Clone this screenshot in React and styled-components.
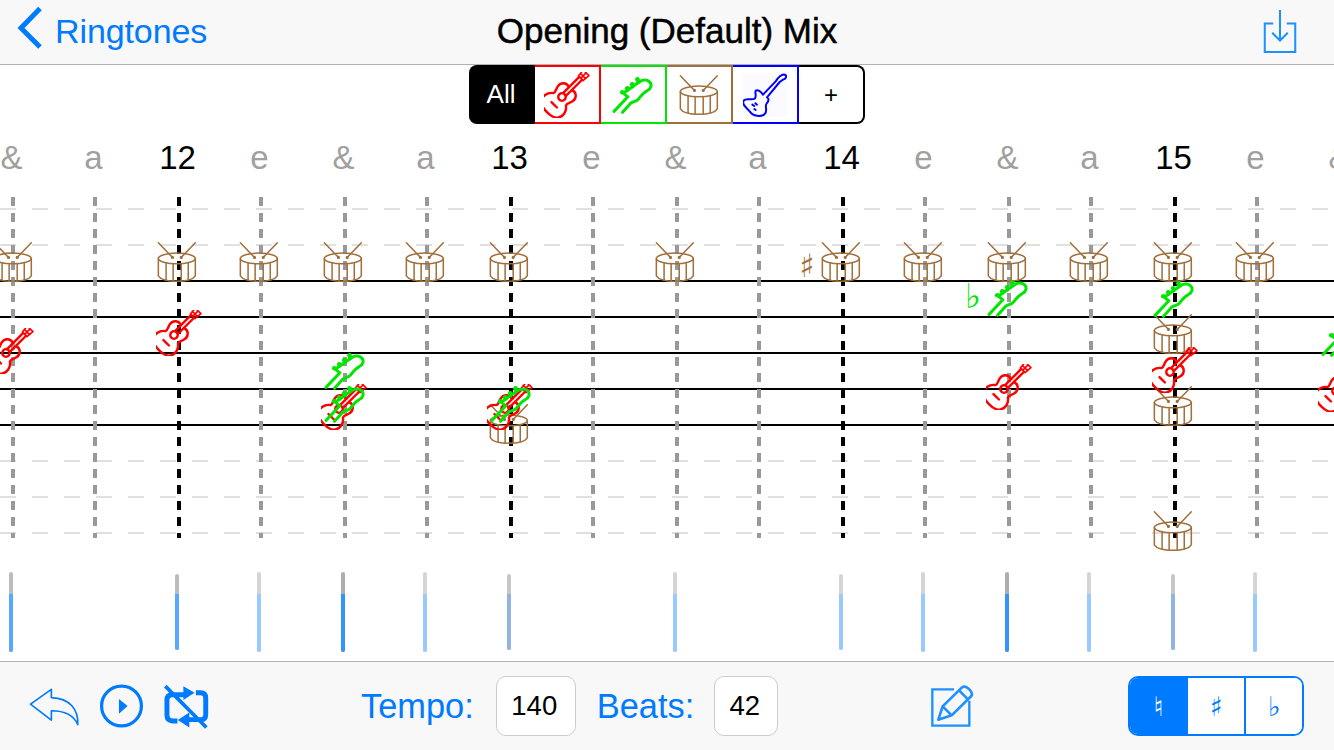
import React from "react";
import styled, { createGlobalStyle } from "styled-components";

const BLUE = "#007aff";
const BROWN = "#a0703c";
const RED = "#ff0000";
const GREEN = "#00e600";

const GlobalStyle = createGlobalStyle`
  html, body { margin: 0; padding: 0; background: #fff; }
  body { font-family: "Liberation Sans", Arial, sans-serif; overflow: hidden; }
`;

// drawings, all in the coordinates they were traced at
function Guitar({ color = RED }) {
  return (
    <svg viewBox="0 0 46 46" width="46" height="46" fill="none" stroke={color} strokeWidth="2.2" strokeLinecap="round" strokeLinejoin="round">
      <g transform="translate(18 25) rotate(45) scale(1.1)">
        <path d="M-2.5 -11C-7 -12.5 -10.5 -8 -9.5 -4C-9 -1 -7 1 -8 3C-12.5 6 -13.5 12 -10.5 16C-7 20.5 7 20.5 10.5 16C13.5 12 12.5 6 8 3C7 1 9 -1 9.5 -4C10.5 -8 7 -12.5 2.5 -11" />
        <circle cx="0" cy="0" r="3.4" />
        <path d="M-1.8 -3.2V-24M1.8 -3.2V-24M-3.5 10H3.5" />
        <path d="M-3 -24L-3.6 -31H3.6L3 -24ZM-3.4 -27H3.4M0 -24V-31" strokeWidth="1.5" />
      </g>
    </svg>
  );
}

function Bass({ color = GREEN }) {
  return (
    <svg viewBox="460 45 125 115" width="42" height="38" fill="none" stroke={color} strokeWidth="9" strokeLinecap="round" strokeLinejoin="round">
      <path d="M465 152L507 108L493 97L540 64C550 56 564 55 572 62C581 70 578 83 566 89C552 95 546 108 538 116C530 124 522 122 516 127L491 155" />
      <path d="M507 88L505 82M522 78L520 70M538 66L535 56" />
      <circle cx="490" cy="94" r="7" fill={color} stroke="none" />
      <circle cx="505" cy="82" r="7" fill={color} stroke="none" />
      <circle cx="520" cy="70" r="7" fill={color} stroke="none" />
      <circle cx="536" cy="55" r="7" fill={color} stroke="none" />
    </svg>
  );
}

function Drum({ color = BROWN }) {
  return (
    <svg viewBox="655 38 125 125" width="42" height="42" fill="none" stroke={color} strokeWidth="4.5" strokeLinecap="round">
      <path d="M662 43L704 87M772 43L730 87" />
      <circle cx="704" cy="87" r="2.5" fill={color} />
      <circle cx="730" cy="87" r="2.5" fill={color} />
      <ellipse cx="717" cy="90" rx="55" ry="16" />
      <path d="M662 90V142C668 152 690 158 717 158C744 158 766 152 772 142V90" />
      <path d="M685 104V153M706 107V158M730 107V158M751 104V153" />
    </svg>
  );
}

function ElectricGuitar({ color = "#0000ff" }) {
  return (
    <svg viewBox="850 35 132 132" width="44" height="44" fill="none" stroke={color} strokeWidth="6" strokeLinecap="round" strokeLinejoin="round">
      <rect x="850" y="35" width="132" height="132" fill="#fafaff" stroke="none" />
      <path d="M888 88C895 84 905 92 910 100L948 60C955 50 965 38 975 40C983 42 980 52 970 55L960 62L922 108C930 112 926 120 920 128C915 135 925 150 915 158C905 168 880 165 870 150C860 138 845 130 852 118C858 108 875 118 885 112C892 106 885 95 888 88Z" />
      <path d="M878 130L884 134M887 126L892 130M884 143L888 146" />
    </svg>
  );
}

const ChevronSvg = styled.svg`
  margin-top: -9px;
`;

const Chevron = () => (
  <ChevronSvg viewBox="0 0 28 44" width="28" height="44" fill="none" stroke={BLUE} strokeWidth="5">
    <path d="M24 3.5L5 23L24 42" />
  </ChevronSvg>
);

const ExportIcon = () => (
  <svg viewBox="70 25 100 130" width="34" height="44" fill="none" stroke="#1e90ff" strokeWidth="6">
    <path d="M100 68H75V152H165V68H140M120 28V115M97 95L120 118L143 95" />
  </svg>
);

const UndoIcon = () => (
  <svg viewBox="88 76 156 118" width="52" height="39" fill="none" stroke={BLUE} strokeWidth="5" strokeLinejoin="round">
    <path d="M95 128L158 83V108C215 110 240 145 238 190C225 160 195 148 158 148V176Z" />
  </svg>
);

const PlayIcon = () => (
  <svg viewBox="296 64 140 140" width="45" height="46" fill="none" stroke={BLUE} strokeWidth="10">
    <circle cx="366" cy="134" r="62" />
    <path d="M358 112L385 134L358 158Z" fill={BLUE} stroke="none" />
  </svg>
);

const RepeatIcon = () => (
  <svg viewBox="488 66 140 136" width="46" height="45" fill="none" stroke={BLUE} strokeWidth="15">
    <path d="M556 98H516Q500 98 500 114V160Q500 178 518 178H532" />
    <path d="M566 174H604Q618 174 618 158V108Q618 92 602 92H588" />
    <path d="M550 72L584 92L550 114Z" fill={BLUE} stroke="none" />
    <path d="M568 152L533 175L568 198Z" fill={BLUE} stroke="none" />
    <path d="M495 72L620 198" strokeWidth="11" />
  </svg>
);

const PencilIcon = () => (
  <svg viewBox="90 68 132 132" width="44" height="44" fill="none" stroke="#1e90ff" strokeWidth="7">
    <path d="M162 84H97V193H208V118" />
    <path d="M115 175L128 135L186 78Q196 72 208 84Q220 96 214 104L155 162ZM128 135L155 162M178 88L204 114" strokeWidth="8" strokeLinejoin="round" />
  </svg>
);

// score data
const beats = [
  { x: 13, label: "&" }, { x: 95, label: "a" }, { x: 179, label: "12", main: true },
  { x: 261, label: "e" }, { x: 345, label: "&" }, { x: 427, label: "a" },
  { x: 511, label: "13", main: true }, { x: 593, label: "e" }, { x: 677, label: "&" },
  { x: 759, label: "a" }, { x: 843, label: "14", main: true }, { x: 925, label: "e" },
  { x: 1009, label: "&" }, { x: 1091, label: "a" }, { x: 1175, label: "15", main: true },
  { x: 1257, label: "e" }, { x: 1341, label: "&" },
];
const solidLines = [83, 119, 155, 191, 227];
const ledgerLines = [11, 47, 263, 299, 335];

// x, y = centre of the note, measured on the staff
const drums = [
  [13, 65], [177, 65], [259, 65], [343, 65], [425, 65], [509, 65], [675, 65],
  [841, 65], [923, 65], [1007, 65], [1089, 65], [1173, 65], [1255, 65],
  [1173, 137], [1173, 209], [509, 227], [1173, 334],
];
const guitars = [
  [11, 154], [179, 136], [344, 210], [510, 210], [1009, 190], [1175, 173], [1341, 192],
];
const basses = [
  [345, 174], [345, 207], [511, 207], [1008, 101], [1174, 102], [1342, 141],
];

const velocities = [
  { x: 11, tone: 0.65 }, { x: 177, tone: 0.65, short: true }, { x: 259, tone: 0.4 },
  { x: 343, tone: 0.8 }, { x: 425, tone: 0.4 }, { x: 509, tone: 0.55, short: true, dull: true },
  { x: 675, tone: 0.4 }, { x: 841, tone: 0.4, short: true }, { x: 923, tone: 0.4 },
  { x: 1007, tone: 0.8 }, { x: 1089, tone: 0.4 }, { x: 1173, tone: 0.55, short: true, dull: true },
  { x: 1255, tone: 0.4 },
];

const Page = styled.div`
  width: 1334px;
  height: 750px;
  display: flex;
  flex-direction: column;
  overflow: hidden;
  background: #fff;
`;

const Header = styled.header`
  height: 65px;
  flex: none;
  box-sizing: border-box;
  padding-bottom: 2px;
  display: grid;
  grid-template-columns: 1fr auto 1fr;
  align-items: center;
  background: #f8f8f8;
  border-bottom: 1px solid #b2b2b2;
`;

const BackLink = styled.a`
  display: flex;
  align-items: center;
  gap: 11px;
  padding-left: 16px;
  color: ${BLUE};
  font-size: 34px;
  letter-spacing: -0.1px;
`;

const Title = styled.h1`
  margin: 0;
  font-size: 35px;
  font-weight: 400;
  color: #000;
  -webkit-text-stroke: 0.5px #000;
`;

const HeaderEnd = styled.div`
  display: flex;
  justify-content: flex-end;
  padding-right: 37px;
`;

const Score = styled.main`
  flex: 1;
  display: flex;
  flex-direction: column;
  min-height: 0;
`;

const FilterRow = styled.div`
  height: 60px;
  flex: none;
  display: flex;
  justify-content: center;
`;

const FilterTabs = styled.div`
  width: 396px;
  height: 59px;
  display: flex;
`;

const FilterTab = styled.div`
  flex: 1;
  display: flex;
  align-items: center;
  justify-content: center;
  box-sizing: border-box;
  border: 2px solid ${(p) => p.$color};
  border-left: none;
  &:first-child {
    background: #000;
    color: #fff;
    font-size: 26px;
    border-radius: 8px 0 0 8px;
  }
  &:last-child {
    font-size: 24px;
    border-radius: 0 8px 8px 0;
    color: #000;
  }
`;

const Ruler = styled.div`
  height: 72px;
  flex: none;
  position: relative;
`;

const BeatLabel = styled.span.attrs((p) => ({ style: { left: p.$x - 1.5 } }))`
  position: absolute;
  top: 14px;
  transform: translateX(-50%);
  font-size: 33px;
  line-height: 38px;
  color: ${(p) => (p.$main ? "#000" : "#a0a0a0")};
`;

const Staff = styled.div`
  height: 341px;
  flex: none;
  position: relative;
`;

const StaffLine = styled.div.attrs((p) => ({ style: { top: p.$y } }))`
  position: absolute;
  left: 0;
  right: 0;
  height: 2px;
  background: #000;
`;

const LedgerLine = styled.div.attrs((p) => ({ style: { top: p.$y } }))`
  position: absolute;
  left: 0;
  right: 0;
  height: 2px;
  background: repeating-linear-gradient(to right, #e0e0e0 0 16px, transparent 16px 32px);
`;

const BeatLine = styled.div.attrs((p) => ({ style: { left: p.$x - 2 } }))`
  position: absolute;
  top: 0;
  bottom: 0;
  width: 4px;
  background: repeating-linear-gradient(to bottom, ${(p) => (p.$main ? "#000" : "#999")} 0 9px, transparent 9px 16px);
`;

const Note = styled.div.attrs((p) => ({ style: { left: p.$x, top: p.$y } }))`
  position: absolute;
  transform: translate(-50%, -50%);
  display: flex;
`;

const Accidental = styled.span.attrs((p) => ({ style: { left: p.$x, top: p.$y } }))`
  position: absolute;
  font-family: "DejaVu Sans", sans-serif;
  font-size: ${(p) => p.$size}px;
  line-height: 1;
  color: ${(p) => p.$color};
`;

const VelocityStrip = styled.div`
  flex: 1;
  position: relative;
`;

const Velocity = styled.div.attrs((p) => ({ style: { left: p.$x - 2, opacity: p.$tone } }))`
  position: absolute;
  top: ${(p) => (p.$short ? 36 : 34)}px;
  bottom: ${(p) => (p.$short ? 11 : 9)}px;
  width: 4px;
  border-radius: 2px;
  overflow: hidden;
  background: #999;
  &::after {
    content: "";
    position: absolute;
    left: 0;
    right: 0;
    top: ${(p) => (p.$short ? 20 : 22)}px;
    bottom: 0;
    background: ${(p) => (p.$dull ? "#3a78c8" : BLUE)};
  }
`;

const Toolbar = styled.footer`
  height: 88px;
  flex: none;
  display: flex;
  align-items: center;
  background: #f8f8f8;
  border-top: 1px solid #b2b2b2;
  padding-left: 28px;
  color: ${BLUE};
`;

const IconGroup = styled.div`
  display: flex;
  align-items: center;
  gap: 19px;
  width: 333px;
`;

const FieldLabel = styled.span`
  font-size: 34.4px;
  margin-right: ${(p) => p.$gap}px;
`;

const NumberBox = styled.div`
  width: ${(p) => p.$width}px;
  height: 60px;
  box-sizing: border-box;
  padding-right: 3px;
  display: flex;
  align-items: center;
  justify-content: center;
  background: #fff;
  border: 1px solid #ccc;
  border-radius: 10px;
  color: #000;
  font-size: 27.5px;
  margin-right: ${(p) => p.$after}px;
`;

const Toggle = styled.div`
  margin-left: 154px;
  width: 176px;
  height: 60px;
  box-sizing: border-box;
  display: flex;
  border: 2px solid ${BLUE};
  border-radius: 10px;
  overflow: hidden;
  background: #fff;
`;

const ToggleItem = styled.div`
  flex: 1;
  display: flex;
  align-items: center;
  justify-content: center;
  font-family: "DejaVu Sans", sans-serif;
  font-size: 27px;
  color: ${(p) => (p.$active ? "#fff" : BLUE)};
  background: ${(p) => (p.$active ? BLUE : "#fff")};
  & + & { border-left: 2px solid ${BLUE}; }
`;

export default function App() {
  return (
    <Page>
      <GlobalStyle />
      <Header>
        <BackLink><Chevron />Ringtones</BackLink>
        <Title>Opening (Default) Mix</Title>
        <HeaderEnd><ExportIcon /></HeaderEnd>
      </Header>
      <Score>
        <FilterRow>
          <FilterTabs>
            <FilterTab $color="#000">All</FilterTab>
            <FilterTab $color={RED}><Guitar /></FilterTab>
            <FilterTab $color={GREEN}><Bass /></FilterTab>
            <FilterTab $color={BROWN}><Drum /></FilterTab>
            <FilterTab $color="#0000ff"><ElectricGuitar /></FilterTab>
            <FilterTab $color="#000">+</FilterTab>
          </FilterTabs>
        </FilterRow>
        <Ruler>
          {beats.map((b) => (
            <BeatLabel key={b.x} $x={b.x} $main={b.main}>{b.label}</BeatLabel>
          ))}
        </Ruler>
        <Staff>
          {ledgerLines.map((y) => <LedgerLine key={y} $y={y} />)}
          {solidLines.map((y) => <StaffLine key={y} $y={y} />)}
          {beats.map((b) => <BeatLine key={b.x} $x={b.x} $main={b.main} />)}
          {drums.map(([x, y]) => <Note key={`d${x}-${y}`} $x={x} $y={y}><Drum /></Note>)}
          {guitars.map(([x, y]) => <Note key={`g${x}-${y}`} $x={x} $y={y}><Guitar /></Note>)}
          {basses.map(([x, y]) => <Note key={`b${x}-${y}`} $x={x} $y={y}><Bass /></Note>)}
          <Accidental $x={799} $y={53} $size={32} $color={BROWN}>♯</Accidental>
          <Accidental $x={965} $y={82} $size={34} $color={GREEN}>♭</Accidental>
        </Staff>
        <VelocityStrip>
          {velocities.map((v) => (
            <Velocity key={v.x} $x={v.x} $tone={v.tone} $short={v.short} $dull={v.dull} />
          ))}
        </VelocityStrip>
      </Score>
      <Toolbar>
        <IconGroup>
          <UndoIcon />
          <PlayIcon />
          <RepeatIcon />
        </IconGroup>
        <FieldLabel $gap={22}>Tempo:</FieldLabel>
        <NumberBox $width={80} $after={21}>140</NumberBox>
        <FieldLabel $gap={20}>Beats:</FieldLabel>
        <NumberBox $width={64} $after={152}>42</NumberBox>
        <PencilIcon />
        <Toggle>
          <ToggleItem $active>♮</ToggleItem>
          <ToggleItem>♯</ToggleItem>
          <ToggleItem>♭</ToggleItem>
        </Toggle>
      </Toolbar>
    </Page>
  );
}
